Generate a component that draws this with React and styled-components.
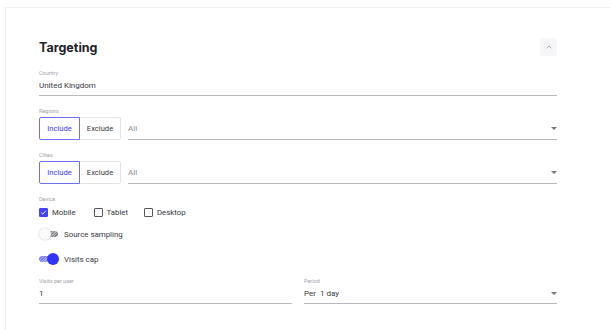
import styled, { createGlobalStyle } from 'styled-components';

const GlobalStyle = createGlobalStyle`
  html, body {
    margin: 0;
    background: #fff;
    overflow: hidden;
  }
  body {
    font-family: Roboto, "Liberation Sans", sans-serif;
    color: #36363c;
  }
`;

const Page = styled.div`
  padding: 7px 0 0 5px;
`;

const Card = styled.section`
  width: 605px;
  height: 323px;
  border: 1px solid #f1f1f3;
  border-right: none;
  border-bottom: none;
  padding: 30px 0 0 33px;
  box-sizing: border-box;
`;

const Content = styled.div`
  width: 518px;
  display: flex;
  flex-direction: column;
`;

const Header = styled.div`
  height: 18px;
  display: flex;
  align-items: center;
  justify-content: space-between;
`;

const Title = styled.h2`
  margin: 0;
  font-family: Inter, "Open Sans", sans-serif;
  font-size: 12.5px;
  font-weight: 700;
  color: #222228;
`;

const CollapseButton = styled.button`
  width: 17px;
  height: 18px;
  padding: 0;
  border: none;
  border-radius: 2px;
  background: #f6f6f8;
  display: flex;
  align-items: center;
  justify-content: center;
`;

const Field = styled.div`
  margin-top: ${(p) => p.$gap ?? 11}px;
  display: flex;
  flex-direction: column;
  flex: ${(p) => (p.$grow ? 1 : 'none')};
`;

const Label = styled.div`
  height: 8px;
  line-height: 8px;
  font-size: 5.5px;
  color: #a3a3aa;
`;

const Underlined = styled.div`
  height: 16px;
  display: flex;
  align-items: center;
  justify-content: space-between;
  border-bottom: 1px solid #b9b9c0;
  font-size: 8px;
  color: ${(p) => (p.$muted ? '#8d8d94' : '#36363c')};
  padding-bottom: 2px;
  box-sizing: content-box;
`;

const Row = styled.div`
  display: flex;
  align-items: flex-end;
  gap: ${(p) => p.$gap ?? 0}px;
  margin-top: ${(p) => p.$top ?? 0}px;
`;

const Segment = styled.div`
  display: flex;
  height: 23px;
`;

const SegmentButton = styled.button`
  height: 23px;
  width: ${(p) => p.$w}px;
  padding: 0;
  font-family: inherit;
  font-size: 7.6px;
  background: #fff;
  color: ${(p) => (p.$active ? '#3c3cf0' : '#36363c')};
  border: 1px solid ${(p) => (p.$active ? '#6f6ff2' : '#e4e4e8')};
  border-radius: ${(p) => (p.$first ? '2px 0 0 2px' : '0 2px 2px 0')};
  margin-left: ${(p) => (p.$first ? 0 : -1)}px;
  position: relative;
  z-index: ${(p) => (p.$active ? 1 : 0)};
`;

const SelectBox = styled(Underlined)`
  flex: 1;
  margin-left: 7px;
  height: 20px;
  padding-bottom: 1px;
`;

const CheckRow = styled.div`
  display: flex;
  align-items: center;
  height: 14px;
  margin-top: 2px;
`;

const Check = styled.label`
  display: flex;
  align-items: center;
  font-size: 7.8px;
  margin-right: ${(p) => p.$mr}px;
`;

const Box = styled.span`
  width: 9px;
  height: 9px;
  box-sizing: border-box;
  border: 1px solid ${(p) => (p.$on ? '#4242f2' : '#55555c')};
  background: ${(p) => (p.$on ? '#4242f2' : '#fff')};
  border-radius: 1px;
  margin-right: 4px;
  display: flex;
  align-items: center;
  justify-content: center;
`;

const SwitchRow = styled.div`
  display: flex;
  align-items: center;
  height: 14px;
  margin-top: ${(p) => p.$top}px;
  font-size: 7.9px;
`;

const Switch = styled.span`
  position: relative;
  width: 20px;
  height: 12px;
  margin-right: 5px;
  display: inline-block;
`;

const Track = styled.span`
  position: absolute;
  top: 3px;
  left: ${(p) => (p.$on ? 0 : 4)}px;
  width: 15px;
  height: 6px;
  border-radius: 3px;
  background: ${(p) =>
    p.$on
      ? 'repeating-linear-gradient(135deg, #7b7bf5 0 1px, #b0b0fa 1px 2px)'
      : 'repeating-linear-gradient(135deg, #7f7f85 0 1px, #b5b5ba 1px 2px)'};
`;

const Thumb = styled.span`
  position: absolute;
  top: 0;
  left: ${(p) => (p.$on ? 8 : 0)}px;
  width: 12px;
  height: 12px;
  border-radius: 50%;
  background: ${(p) => (p.$on ? '#3434f4' : '#fbfbfc')};
  box-shadow: ${(p) => (p.$on ? 'none' : '0 0 1.5px rgba(0,0,0,0.3)')};
`;

const Caret = () => (
  <svg width="6" height="3" viewBox="0 0 6 3">
    <path d="M0 0h6L3 3z" fill="#77777e" />
  </svg>
);

const ChevronUp = () => (
  <svg width="6" height="4" viewBox="0 0 6 4">
    <path d="M0.6 3.4L3 1l2.4 2.4" fill="none" stroke="#9a9aa2" strokeWidth="0.8" />
  </svg>
);

const Tick = () => (
  <svg width="7" height="7" viewBox="0 0 7 7">
    <path d="M1.2 3.6L2.8 5.2 5.9 1.8" fill="none" stroke="#fff" strokeWidth="0.9" />
  </svg>
);

const IncludeExclude = () => (
  <Segment>
    <SegmentButton $first $active $w={41}>Include</SegmentButton>
    <SegmentButton $w={42}>Exclude</SegmentButton>
  </Segment>
);

const ToggleLine = ({ on, label, top }) => (
  <SwitchRow $top={top}>
    <Switch>
      <Track $on={on} />
      <Thumb $on={on} />
    </Switch>
    {label}
  </SwitchRow>
);

const devices = [
  { name: 'Mobile', on: true, mr: 18 },
  { name: 'Tablet', on: false, mr: 16 },
  { name: 'Desktop', on: false, mr: 0 },
];

export default function App() {
  return (
    <>
      <GlobalStyle />
      <Page>
        <Card>
          <Content>
            <Header>
              <Title>Targeting</Title>
              <CollapseButton aria-label="Collapse">
                <ChevronUp />
              </CollapseButton>
            </Header>

            <Field $gap={13}>
              <Label>Country</Label>
              <Underlined>United Kingdom</Underlined>
            </Field>

            <Field>
              <Label>Regions</Label>
              <Row $top={2}>
                <IncludeExclude />
                <SelectBox $muted>
                  All
                  <Caret />
                </SelectBox>
              </Row>
            </Field>

            <Field>
              <Label>Cities</Label>
              <Row $top={2}>
                <IncludeExclude />
                <SelectBox $muted>
                  All
                  <Caret />
                </SelectBox>
              </Row>
            </Field>

            <Field>
              <Label>Device</Label>
              <CheckRow>
                {devices.map((d) => (
                  <Check key={d.name} $mr={d.mr}>
                    <Box $on={d.on}>{d.on && <Tick />}</Box>
                    {d.name}
                  </Check>
                ))}
              </CheckRow>
            </Field>

            <ToggleLine on={false} label="Source sampling" top={8} />
            <ToggleLine on label="Visits cap" top={11} />

            <Row $gap={12}>
              <Field $grow>
                <Label>Visits per user</Label>
                <Underlined>1</Underlined>
              </Field>
              <Field $grow>
                <Label>Period</Label>
                <Underlined>
                  Per&nbsp;&nbsp;1 day
                  <Caret />
                </Underlined>
              </Field>
            </Row>
          </Content>
        </Card>
      </Page>
    </>
  );
}
